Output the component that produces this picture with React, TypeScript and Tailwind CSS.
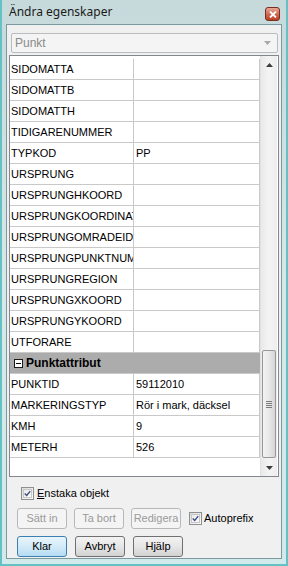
import React from "react";

const rowsA: [string, string][] = [
  ["SIDOMATTA", ""],
  ["SIDOMATTB", ""],
  ["SIDOMATTH", ""],
  ["TIDIGARENUMMER", ""],
  ["TYPKOD", "PP"],
  ["URSPRUNG", ""],
  ["URSPRUNGHKOORD", ""],
  ["URSPRUNGKOORDINAT", ""],
  ["URSPRUNGOMRADEID", ""],
  ["URSPRUNGPUNKTNUMMER", ""],
  ["URSPRUNGREGION", ""],
  ["URSPRUNGXKOORD", ""],
  ["URSPRUNGYKOORD", ""],
  ["UTFORARE", ""],
];

const rowsB: [string, string][] = [
  ["PUNKTID", "59112010"],
  ["MARKERINGSTYP", "Rör i mark, däcksel"],
  ["KMH", "9"],
  ["METERH", "526"],
];

function Row({ label, value }: { label: string; value: string }) {
  return (
    <div className="flex h-[21px] border-b border-[#c9c9c9] bg-white">
      <div className="w-[124px] shrink-0 overflow-hidden whitespace-nowrap border-r border-[#c9c9c9] pl-[1px] leading-[20px]">
        {label}
      </div>
      <div className="w-[126px] shrink-0 overflow-hidden whitespace-nowrap border-r border-[#c9c9c9] pl-[2px] leading-[20px]">
        {value}
      </div>
    </div>
  );
}

function Check() {
  return (
    <div className="flex h-[13px] w-[13px] items-center justify-center border border-[#8e8f8f] bg-gradient-to-br from-[#dcdcdc] to-[#fbfbfb]">
      <div className="flex h-[9px] w-[9px] items-center justify-center border border-[#c6c6c6] bg-gradient-to-br from-[#e8e8e8] to-[#ffffff]">
        <svg width="9" height="9" viewBox="0 0 9 9">
          <path d="M1 4.5 L3.5 7 L8 1.5" fill="none" stroke="#3b4c7a" strokeWidth="1.8" />
        </svg>
      </div>
    </div>
  );
}

function Btn({
  children,
  kind,
}: {
  children: React.ReactNode;
  kind: "normal" | "disabled" | "default";
}) {
  const cls =
    kind === "disabled"
      ? "border-[#b5b9bc] bg-[#f4f4f4] text-[#9a9a9a]"
      : kind === "default"
      ? "border-[#3c7fb1] bg-gradient-to-b from-[#e8f5fc] via-[#d3ebf8] to-[#b5dcf3] text-black"
      : "border-[#707070] bg-gradient-to-b from-[#f3f3f3] via-[#e6e6e6] to-[#d2d2d2] text-black";
  return (
    <div
      className={`flex h-[21px] w-[50px] items-center justify-center rounded-[3px] border text-[11px] ${cls}`}
    >
      {children}
    </div>
  );
}

export default function App() {
  return (
    <div
      className="flex h-[566px] w-[288px] flex-col border-x-2 border-b-2 border-[#62c2c4] bg-gradient-to-b from-[#c6d9db] via-[#d8e7e8] to-[#d2eaea] text-black"
      style={{ fontFamily: '"Liberation Sans", Arial, sans-serif' }}
    >
      {/* title bar */}
      <div className="flex h-[24px] shrink-0 items-start justify-between pl-[7px] pr-[6px]">
        <div
          className="mt-[4px] text-[12px] leading-[16px] text-[#1a1a1a]"
          style={{ fontFamily: '"Noto Sans", "Open Sans", sans-serif' }}
        >
          Ändra egenskaper
        </div>
        <div className="mt-[7px] flex h-[14px] w-[15px] items-center justify-center rounded-[3px] border border-[#7a2e22] bg-gradient-to-b from-[#e8a898] via-[#d26a52] to-[#b8401f]">
          <svg width="8" height="7" viewBox="0 0 8 7">
            <path d="M1 0.5 L7 6.5 M7 0.5 L1 6.5" stroke="white" strokeWidth="1.8" />
          </svg>
        </div>
      </div>

      {/* client */}
      <div className="mx-[4px] flex h-[535px] flex-col border border-[#7b9aa0] bg-[#f0f0f0]">
        {/* combo */}
        <div className="ml-[4px] mt-[8px] flex h-[20px] w-[267px] items-center justify-between rounded-[2px] border border-[#b8bcbf] bg-[#f4f4f4] pl-[3px] pr-[6px]">
          <span className="text-[12px] text-[#8a8a8a]">Punkt</span>
          <svg width="7" height="4" viewBox="0 0 7 4">
            <path d="M0 0 L7 0 L3.5 4 Z" fill="#a8a8a8" />
          </svg>
        </div>

        {/* grid */}
        <div className="ml-[2px] mt-[2px] flex h-[422px] w-[270px] border border-[#828790] bg-white text-[11px]">
          <div className="w-[250px] shrink-0 pt-[3px]">
            {rowsA.map(([l, v]) => (
              <Row key={l} label={l} value={v} />
            ))}
            <div className="flex h-[21px] items-center border-b border-[#c9c9c9] bg-[#acacac] pl-[4px]">
              <div className="flex h-[9px] w-[9px] items-center justify-center border border-[#1a1a1a] bg-white">
                <div className="h-[1px] w-[5px] bg-black" />
              </div>
              <span className="ml-[3px] text-[12px] font-bold">Punktattribut</span>
            </div>
            {rowsB.map(([l, v]) => (
              <Row key={l} label={l} value={v} />
            ))}
          </div>
          {/* scrollbar */}
          <div className="flex w-[17px] shrink-0 flex-col border-l border-[#e2e2e2] bg-gradient-to-r from-[#e9e9e9] via-[#f4f4f4] to-[#ededed]">
            <div className="flex h-[17px] items-center justify-center">
              <svg width="7" height="4" viewBox="0 0 7 4">
                <path d="M0 4 L7 4 L3.5 0 Z" fill="#3c3c3c" />
              </svg>
            </div>
            <div className="h-[277px]" />
            <div className="mx-[1px] flex h-[108px] items-center justify-center rounded-[2px] border border-[#979797] bg-gradient-to-r from-[#f3f3f3] via-[#e8e8e8] to-[#d6d6d6]">
              <div className="flex flex-col gap-[1px]">
                <div className="h-[1px] w-[6px] bg-[#7a7a7a]" />
                <div className="h-[1px] w-[6px] bg-[#7a7a7a]" />
                <div className="h-[1px] w-[6px] bg-[#7a7a7a]" />
                <div className="h-[1px] w-[6px] bg-[#7a7a7a]" />
              </div>
            </div>
            <div className="h-[1px]" />
            <div className="flex h-[17px] items-center justify-center">
              <svg width="7" height="4" viewBox="0 0 7 4">
                <path d="M0 0 L7 0 L3.5 4 Z" fill="#3c3c3c" />
              </svg>
            </div>
          </div>
        </div>

        {/* checkbox row */}
        <div className="ml-[14px] mt-[8px] flex items-center text-[11px]">
          <Check />
          <span className="ml-[3px]">
            <span className="underline">E</span>nstaka objekt
          </span>
        </div>

        {/* buttons row 1 */}
        <div className="ml-[10px] mt-[6px] flex items-center gap-[7px]">
          <Btn kind="disabled">Sätt in</Btn>
          <Btn kind="disabled">Ta bort</Btn>
          <Btn kind="disabled">Redigera</Btn>
          <div className="ml-[1px] flex items-center text-[11px]">
            <Check />
            <span className="ml-[2px]">Autoprefix</span>
          </div>
        </div>

        {/* buttons row 2 */}
        <div className="ml-[10px] mt-[7px] flex items-center gap-[8px]">
          <Btn kind="default">Klar</Btn>
          <Btn kind="normal">Avbryt</Btn>
          <Btn kind="normal">Hjälp</Btn>
        </div>
      </div>
    </div>
  );
}
